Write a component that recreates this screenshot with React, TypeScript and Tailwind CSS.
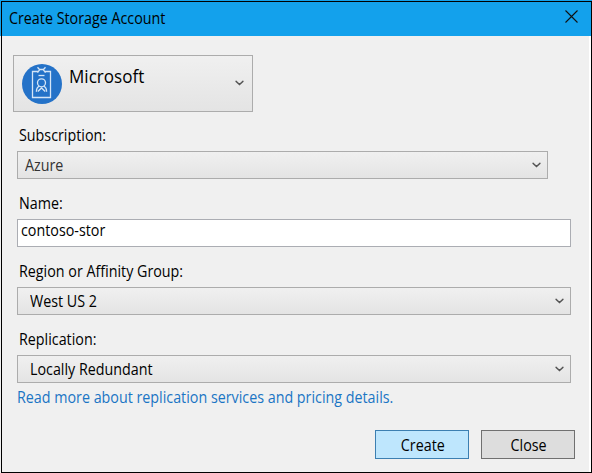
import React from "react";

function Chevron({ className = "" }: { className?: string }) {
  return (
    <svg width="9" height="6" viewBox="0 0 9 6" className={`shrink-0 ${className}`} fill="none">
      <path d="M1.2 0.7V1.5L4.5 4.5 7.8 1.5V0.7" stroke="#555" strokeWidth="1.6" />
    </svg>
  );
}

// Slightly condensed run of interface text.
function Text({ children, className = "origin-left" }: { children: React.ReactNode; className?: string }) {
  return <span className={`inline-block scale-x-[0.922] whitespace-nowrap ${className}`}>{children}</span>;
}

function Label({ children, className = "" }: { children: React.ReactNode; className?: string }) {
  return (
    <div className={`ml-0.5 h-5 w-max leading-5 ${className}`}>
      <Text>{children}</Text>
    </div>
  );
}

function Select({ children, className }: { children: React.ReactNode; className: string }) {
  return (
    <button
      type="button"
      className={`mt-1.5 flex h-7 items-center justify-between border border-[#acacac] bg-linear-to-b from-[#f0f0f0] to-[#e4e4e4] pr-1.5 text-left leading-5 ${className}`}
    >
      {children}
      <Chevron />
    </button>
  );
}

function Badge() {
  return (
    <svg width="40" height="40" viewBox="0 0 40 40" fill="none" className="shrink-0">
      <circle cx="20" cy="20" r="20" fill="#2472c8" />
      <g stroke="#d5e5f6" strokeWidth="1.3">
        <path d="M16 7.5H10.5V33.5H28.5V7.5H23" />
        <path d="M15.5 3.2 17.5 5.5H21.5L23.5 3.2M15.5 8.7 17.8 5.5M23.5 8.7 21.2 5.5" />
        <path d="M16.5 11.5H22.5" />
        <circle cx="19.5" cy="18.8" r="4" />
        <path d="M14.4 27.8C14.4 25 15.5 23 17.3 22.2M24.6 27.8C24.6 25 23.5 23 21.7 22.2M15.8 27.4 19.5 24 23.2 27.4" />
      </g>
    </svg>
  );
}

export default function App() {
  return (
    <div className="h-[473px] w-[592px] bg-linear-to-b from-[#13a1ec] from-[36px] to-[#f0f0f0] to-[36px] pt-px pl-px font-['Open_Sans','Noto_Sans',sans-serif] text-[15.5px] text-black">
      <div className="flex h-[472px] w-[591px] flex-col border border-black">
        <header className="flex h-[34px] shrink-0 items-center justify-between bg-[#13a1ec] pr-[13px] pl-[7px]">
          <h1 className="mb-0.5 leading-5">
            <Text>Create Storage Account</Text>
          </h1>
          <svg width="13" height="13" viewBox="0 0 13 13" className="-mt-1.5" stroke="#111" strokeWidth="1.1">
            <path d="M.5.5 12.5 12.5M12.5.5.5 12.5" />
          </svg>
        </header>
        <main className="flex flex-1 flex-col border-r-2 border-white pt-[19px] pl-[11px]">
          <button
            type="button"
            className="flex h-[57px] w-60 items-center border border-[#acacac] bg-linear-to-b from-[#f0f0f0] to-[#e4e4e4] pr-2 pl-2 text-left"
          >
            <Badge />
            <span className="mb-[15px] ml-[7px] flex-1 text-[18.5px] leading-6">
              <Text>Microsoft</Text>
            </span>
            <Chevron className="-mt-0.5" />
          </button>
          <div className="ml-1 flex flex-col pt-[13px]">
            <Label>Subscription:</Label>
            <Select className="w-[531px] pl-[7px]">
              <span className="mb-px text-[#333]">
                <Text>Azure</Text>
              </span>
            </Select>
            <Label className="mt-3.5">Name:</Label>
            <div className="mt-1.5 h-7 w-[554px] border border-[#abadb3] bg-white">
              <input
                readOnly
                value="contoso-stor"
                className="block h-5 w-[590px] origin-left scale-x-[0.922] bg-transparent pl-[3px] leading-5 outline-none"
              />
            </div>
            <Label className="mt-3.5">Region or Affinity Group:</Label>
            <Select className="w-[554px] pl-3">
              <Text>West US 2</Text>
            </Select>
            <Label className="mt-3.5">Replication:</Label>
            <Select className="w-[554px] pl-3">
              <Text>Locally Redundant</Text>
            </Select>
            <a className="mt-1 h-5 w-max leading-5 text-[#1a75c4]">
              <Text>Read more about replication services and pricing details.</Text>
            </a>
          </div>
          <div className="mt-[23px] flex justify-end gap-3 pr-3.5">
            <button type="button" className="h-[29px] w-[94px] border border-[#3c7fb1] bg-[#bee6fd] pl-px leading-5">
              <Text className="origin-center">Create</Text>
            </button>
            <button type="button" className="h-[29px] w-[94px] border border-[#707070] bg-[#dddddd] pl-px leading-5">
              <Text className="origin-center">Close</Text>
            </button>
          </div>
        </main>
      </div>
    </div>
  );
}
